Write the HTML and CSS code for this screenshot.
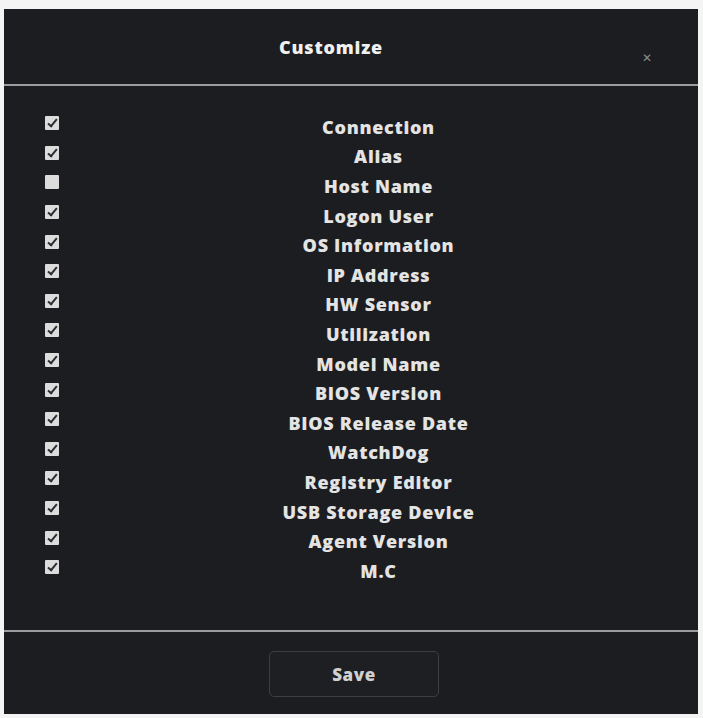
FILE: index.html
```html
<!DOCTYPE html>
<html lang="en">

<head>
    <meta charset="UTF-8">
    <meta name="viewport" content="width=device-width, initial-scale=1.0">
    <title>Customize</title>
    <link rel="stylesheet" href="styles.css">
</head>

<body>
    <div class="dialog">
        <div class="header">
            <h1>Customize</h1>
            <span class="close">&#x2715;</span>
        </div>
        <div class="list">
            <label class="row"><span class="check on"></span><span class="name">Connection</span></label>
            <label class="row"><span class="check on"></span><span class="name">Alias</span></label>
            <label class="row"><span class="check"></span><span class="name">Host Name</span></label>
            <label class="row"><span class="check on"></span><span class="name">Logon User</span></label>
            <label class="row"><span class="check on"></span><span class="name">OS Information</span></label>
            <label class="row"><span class="check on"></span><span class="name">IP Address</span></label>
            <label class="row"><span class="check on"></span><span class="name">HW Sensor</span></label>
            <label class="row"><span class="check on"></span><span class="name">Utilization</span></label>
            <label class="row"><span class="check on"></span><span class="name">Model Name</span></label>
            <label class="row"><span class="check on"></span><span class="name">BIOS Version</span></label>
            <label class="row"><span class="check on"></span><span class="name">BIOS Release Date</span></label>
            <label class="row"><span class="check on"></span><span class="name">WatchDog</span></label>
            <label class="row"><span class="check on"></span><span class="name">Registry Editor</span></label>
            <label class="row"><span class="check on"></span><span class="name">USB Storage Device</span></label>
            <label class="row"><span class="check on"></span><span class="name">Agent Version</span></label>
            <label class="row"><span class="check on"></span><span class="name">M.C</span></label>
        </div>
        <div class="footer">
            <button class="btn">Save</button>
        </div>
    </div>
</body>

</html>
```

FILE: styles.css
```css
* {
    padding: 0;
    margin: 0;
    box-sizing: border-box;
}

body {
    background-color: #f4f4f4;
    font-family: "Open Sans", "Liberation Sans", sans-serif;
    padding: 9px 5px 4px 4px;
}

.dialog {
    display: flex;
    flex-direction: column;
    height: 705px;
    background-color: #1b1d21;
    color: #e4e4e4;
}

.header {
    position: relative;
    height: 77px;
    display: flex;
    align-items: center;
    justify-content: center;
    padding-right: 40px;
    border-bottom: 2px solid #9a9ca0;
}

.header h1 {
    font-size: 18px;
    font-weight: 800;
    letter-spacing: 0.8px;
    color: #f0f0f0;
    margin-top: 1px;
}

.close {
    position: absolute;
    right: 46px;
    top: 40px;
    font-size: 12px;
    color: #8a8c90;
}

.list {
    flex: 1;
    padding: 26px 0 0 41px;
}

.row {
    display: flex;
    align-items: center;
    height: 29.6px;
}

.check {
    width: 14px;
    height: 14px;
    background-color: #dcdcdc;
    border-radius: 1px;
    margin-top: -7px;
    position: relative;
}

.check.on::after {
    content: "";
    position: absolute;
    left: 5px;
    top: 1px;
    width: 3px;
    height: 8px;
    border-right: 2px solid #2a2c30;
    border-bottom: 2px solid #2a2c30;
    transform: rotate(40deg);
}

.name {
    flex: 1;
    text-align: center;
    font-size: 18px;
    font-weight: 800;
    letter-spacing: 0.7px;
}

.footer {
    height: 84px;
    border-top: 2px solid #9a9ca0;
    display: flex;
    justify-content: center;
    align-items: center;
    padding-top: 2px;
}

.btn {
    width: 170px;
    height: 46px;
    margin-left: 6px;
    background-color: #1d1f23;
    border: 1px solid #3c3f44;
    border-radius: 5px;
    color: #d0d0d0;
    font-family: "Open Sans", "Liberation Sans", sans-serif;
    font-size: 17px;
    font-weight: 800;
    letter-spacing: 0.6px;
}
```
